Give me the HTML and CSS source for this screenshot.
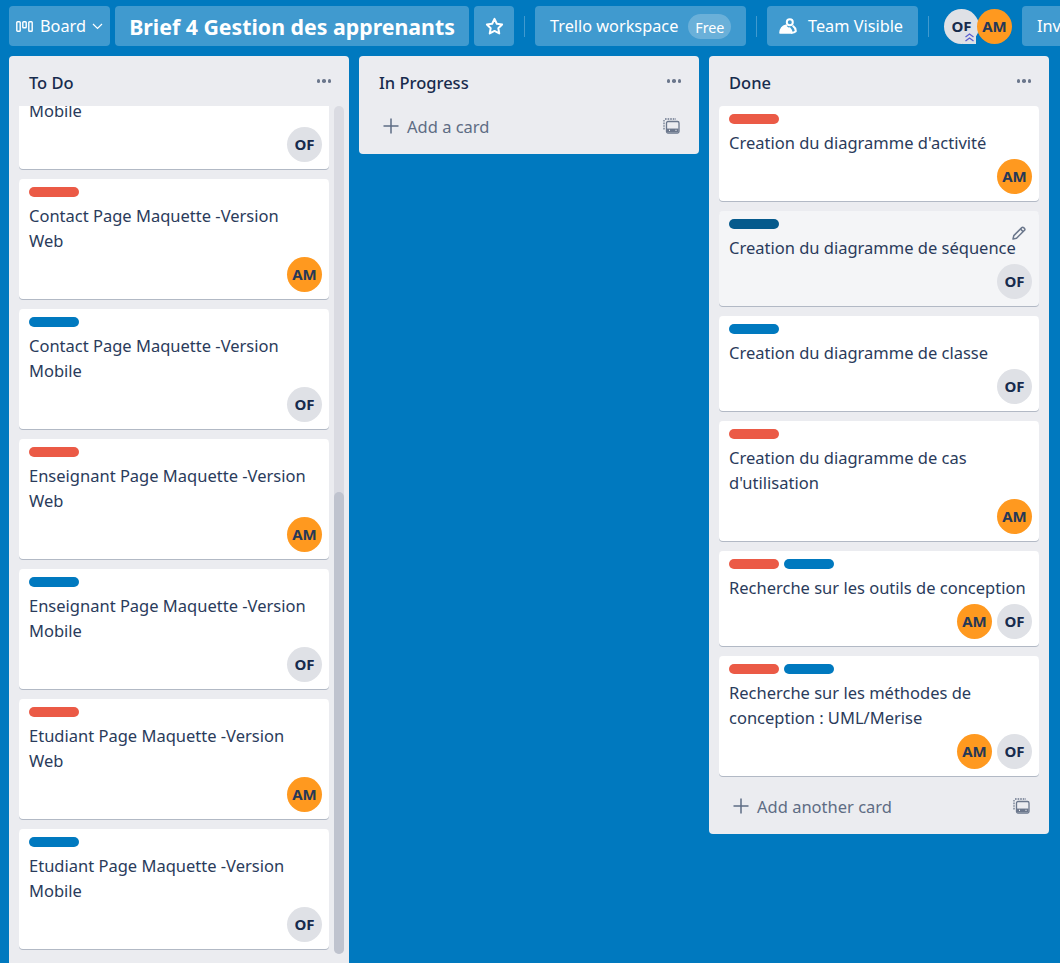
FILE: index.html
```html
<!DOCTYPE html>
<html lang="fr">
<head>
<meta charset="utf-8">
<title>Brief 4 Gestion des apprenants</title>
<link rel="stylesheet" href="styles.css">
</head>
<body>
<header class="topbar">
  <button class="btn board-btn">
    <svg class="board-ic" width="17" height="11" viewBox="0 0 17 11" fill="none" stroke="#fff" stroke-width="1.400"><rect x=".8" y=".8" width="3.400" height="9.400" rx=".8"/><rect x="6.800" y=".8" width="3.400" height="6" rx=".8"/><rect x="12.800" y=".8" width="3.400" height="9.400" rx=".8"/></svg>
    <span>Board</span>
    <svg class="chev" width="11" height="7" viewBox="0 0 11 7" fill="none" stroke="#fff" stroke-width="1.200"><path d="M1 1l4.500 4.500L10 1"/></svg>
  </button>
  <button class="btn title-btn">Brief 4 Gestion des apprenants</button>
  <button class="btn star-btn" aria-label="Star">
    <svg width="19" height="19" viewBox="0 0 18 18" fill="none" stroke="#fff" stroke-width="1.900" stroke-linejoin="round"><path d="M9 1.800l2.200 4.600 5 .7-3.600 3.500.9 5L9 13.200l-4.500 2.400.9-5L1.800 7.100l5-.7z"/></svg>
  </button>
  <span class="sep"></span>
  <button class="btn workspace-btn"><span>Trello workspace</span><span class="free">Free</span></button>
  <span class="sep"></span>
  <button class="btn team-btn">
    <svg width="18" height="16" viewBox="0 0 18 16" fill="none" stroke="#fff" stroke-width="2" stroke-linejoin="round" stroke-linecap="round"><circle cx="10.800" cy="4.200" r="3"/><path d="M7 7.500C3.800 8.300 1.600 10.800 1.200 14.800h11.500c-.3-1.800-1-3.300-2.200-4.500" fill="#fff"/><path d="M14.200 8.200c1.500 1 2.400 2.700 2.600 5-.8.800-2 1.500-4 1.500"/></svg>
    <span>Team Visible</span>
  </button>
  <span class="sep"></span>
  <div class="members">
    <span class="avatar grey">OF
      <svg class="admin" width="13" height="13" viewBox="0 0 13 13" fill="none" stroke="#5a5fcf" stroke-width="1.300"><path d="M2.500 6 6.500 3l4 3M2.500 10l4-3 4 3"/></svg>
    </span>
    <span class="avatar orange">AM</span>
  </div>
  <button class="btn invite-btn">Invite</button>
</header>

<main class="board">
  <section class="list list-scroll">
    <h2 class="list-title"><span>To Do</span><span class="dots"><i></i><i></i><i></i></span></h2>
    <div class="cards-wrap">
      <div class="cards offset">
        <article class="card"><div class="labels"><span class="label blue"></span></div><p><br>Mobile</p><div class="card-members"><span class="avatar grey">OF</span></div></article>
        <article class="card"><div class="labels"><span class="label red"></span></div><p>Contact Page Maquette -Version<br>Web</p><div class="card-members"><span class="avatar orange">AM</span></div></article>
        <article class="card"><div class="labels"><span class="label blue"></span></div><p>Contact Page Maquette -Version<br>Mobile</p><div class="card-members"><span class="avatar grey">OF</span></div></article>
        <article class="card"><div class="labels"><span class="label red"></span></div><p>Enseignant Page Maquette -Version<br>Web</p><div class="card-members"><span class="avatar orange">AM</span></div></article>
        <article class="card"><div class="labels"><span class="label blue"></span></div><p>Enseignant Page Maquette -Version<br>Mobile</p><div class="card-members"><span class="avatar grey">OF</span></div></article>
        <article class="card"><div class="labels"><span class="label red"></span></div><p>Etudiant Page Maquette -Version<br>Web</p><div class="card-members"><span class="avatar orange">AM</span></div></article>
        <article class="card"><div class="labels"><span class="label blue"></span></div><p>Etudiant Page Maquette -Version<br>Mobile</p><div class="card-members"><span class="avatar grey">OF</span></div></article>
      </div>
      <div class="scrolltrack"><div class="scrollthumb"></div></div>
    </div>
  </section>

  <section class="list">
    <h2 class="list-title"><span>In Progress</span><span class="dots"><i></i><i></i><i></i></span></h2>
    <div class="add-row">
      <span class="add"><svg width="16" height="16" viewBox="0 0 16 16" stroke="#5e6c84" stroke-width="1.500"><path d="M8 .5v15M.5 8h15"/></svg>Add a card</span>
      <svg width="17" height="16" viewBox="0 0 17 16" fill="none" stroke="#6b778c" stroke-width="1.300"><path d="M1 2v10" stroke-dasharray="1.600 1"/><path d="M2 1h11" stroke-dasharray="1.600 1"/><rect x="3.500" y="3.500" width="12.500" height="11.500" rx="1.500"/><path d="M4 12.300h11.500" stroke-width="3.500"/><path d="M6 12.300h1M12.500 12.300h1" stroke="#ebecf0"/></svg>
    </div>
  </section>

  <section class="list">
    <h2 class="list-title"><span>Done</span><span class="dots"><i></i><i></i><i></i></span></h2>
    <div class="cards">
      <article class="card"><div class="labels"><span class="label red"></span></div><p>Creation du diagramme d'activité</p><div class="card-members"><span class="avatar orange">AM</span></div></article>
      <article class="card hover"><div class="labels"><span class="label navy"></span></div><p>Creation du diagramme de séquence</p><div class="card-members"><span class="avatar grey">OF</span></div>
        <span class="edit"><svg width="16" height="16" viewBox="0 0 16 16" fill="none" stroke="#6b778c" stroke-width="1.500" stroke-linejoin="round"><path d="M2 14l.8-3.400L10.800 2.600a1.300 1.300 0 0 1 1.800 0l.9.900a1.300 1.300 0 0 1 0 1.800L5.500 13.300z"/><path d="M9.500 4l2.600 2.600"/></svg></span>
      </article>
      <article class="card"><div class="labels"><span class="label blue"></span></div><p>Creation du diagramme de classe</p><div class="card-members"><span class="avatar grey">OF</span></div></article>
      <article class="card"><div class="labels"><span class="label red"></span></div><p>Creation du diagramme de cas<br>d'utilisation</p><div class="card-members"><span class="avatar orange">AM</span></div></article>
      <article class="card"><div class="labels"><span class="label red"></span><span class="label blue"></span></div><p>Recherche sur les outils de conception</p><div class="card-members"><span class="avatar orange">AM</span><span class="avatar grey">OF</span></div></article>
      <article class="card"><div class="labels"><span class="label red"></span><span class="label blue"></span></div><p>Recherche sur les méthodes de<br>conception : UML/Merise</p><div class="card-members"><span class="avatar orange">AM</span><span class="avatar grey">OF</span></div></article>
    </div>
    <div class="add-row done-add">
      <span class="add"><svg width="16" height="16" viewBox="0 0 16 16" stroke="#5e6c84" stroke-width="1.500"><path d="M8 .5v15M.5 8h15"/></svg>Add another card</span>
      <svg width="17" height="16" viewBox="0 0 17 16" fill="none" stroke="#6b778c" stroke-width="1.300"><path d="M1 2v10" stroke-dasharray="1.600 1"/><path d="M2 1h11" stroke-dasharray="1.600 1"/><rect x="3.500" y="3.500" width="12.500" height="11.500" rx="1.500"/><path d="M4 12.300h11.500" stroke-width="3.500"/><path d="M6 12.300h1M12.500 12.300h1" stroke="#ebecf0"/></svg>
    </div>
  </section>
</main>
</body>
</html>
```

FILE: styles.css
```css
* { box-sizing: border-box; }
html, body { height: 100%; }
body {
  margin: 0;
  height: 963px;
  overflow: hidden;
  background: #0079bf;
  font-family: "Noto Sans", "Liberation Sans", sans-serif;
  color: #172b4d;
  display: flex;
  flex-direction: column;
}
.topbar {
  display: flex;
  align-items: center;
  height: 56px;
  padding: 6px 0 10px 9px;
  white-space: nowrap;
  flex: none;
  width: 1060px;
  overflow: hidden;
}
.btn {
  height: 40px;
  border: 0;
  border-radius: 4px;
  background: rgba(255, 255, 255, .25);
  color: #fff;
  font: 400 16.300px "Noto Sans", sans-serif;
  display: inline-flex;
  align-items: center;
  flex: none;
  padding: 0;
}
.board-btn { width: 101px; padding-left: 7px; }
.board-ic { margin-right: 7px; }
.chev { margin-left: 6px; }
.title-btn { width: 354px; margin-left: 5px; justify-content: center; font-size: 21.300px; font-weight: 700; }
.star-btn { width: 40px; margin-left: 5px; justify-content: center; }
.sep { width: 1px; height: 21px; background: rgba(255, 255, 255, .25); margin: 0 10px; flex: none; }
.workspace-btn { width: 211px; padding-left: 15px; gap: 10px; }
.free { background: rgba(255, 255, 255, .22); border-radius: 13px; height: 25px; width: 43px; font-size: 14.300px; line-height: 27px; text-align: center; }
.team-btn { width: 151px; padding-left: 12px; gap: 11px; }
.members { display: flex; margin-left: 5px; margin-top: 1px; }
.avatar {
  width: 35px;
  height: 35px;
  border-radius: 50%;
  display: inline-flex;
  align-items: center;
  justify-content: center;
  padding-bottom: 2px;
  font-size: 15px;
  font-weight: 700;
  flex: none;
  position: relative;
}
.avatar.grey { background: #dfe1e6; color: #172b4d; }
.avatar.orange { background: #ff991f; color: #253858; }
.members .orange { margin-left: -2px; }
.admin { position: absolute; right: 3px; bottom: 0; background: #dfe1e6; }
.invite-btn { width: 80px; margin-left: 10px; padding-left: 15px; }

.board {
  flex: 1;
  min-height: 0;
  display: flex;
  align-items: flex-start;
  gap: 10px;
  padding-left: 9px;
}
.list {
  width: 340px;
  background: #ebecf0;
  border-radius: 4px;
  flex: none;
  display: flex;
  flex-direction: column;
  max-height: 100%;
}
.list-scroll { height: 907px; border-radius: 4px 4px 0 0; }
.list-title {
  margin: 0;
  height: 50px;
  padding: 16px 18px 0 20px;
  font-size: 16.500px;
  line-height: 22px;
  font-weight: 500;
  display: flex;
  justify-content: space-between;
  flex: none;
}
.dots { display: flex; gap: 2px; padding-top: 7px; }
.dots i { width: 3.500px; height: 3.500px; border-radius: 50%; background: #6b778c; }
.cards-wrap { position: relative; height: 848px; overflow: hidden; padding: 0 20px 0 10px; flex: none; }
.cards { display: flex; flex-direction: column; gap: 10px; padding: 0 10px; }
.cards-wrap .cards { padding: 0; }
.offset { margin-top: -57px; }
.card {
  position: relative;
  background: #fff;
  border-radius: 4px;
  box-shadow: 0 1px 0 rgba(9, 30, 66, .25);
  padding: 8px 7px 7px 10px;
}
.card.hover { background: #f4f5f7; }
.labels { display: flex; gap: 5px; height: 10px; margin-bottom: 6px; }
.label { width: 50px; height: 10px; border-radius: 5px; }
.red { background: #eb5a46; }
.blue { background: #0079bf; }
.navy { background: #055a8c; }
.card p { margin: 0 0 4px; font-size: 16.500px; line-height: 25px; color: #2a3b5b; white-space: nowrap; }
.card-members { display: flex; justify-content: flex-end; gap: 5px; height: 35px; }
.edit { position: absolute; right: 12px; top: 13px; width: 16px; height: 16px; }
.scrolltrack { position: absolute; right: 5px; top: 0; bottom: 0; width: 10px; border-radius: 5px; background: #dadbe2; }
.scrollthumb { position: absolute; left: 0; right: 0; top: 386px; height: 462px; border-radius: 5px; background: #bfc3ce; }
.add-row {
  height: 48px;
  padding: 0 19px 8px 24px;
  display: flex;
  align-items: center;
  justify-content: space-between;
  color: #5e6c84;
  font-size: 16.500px;
  flex: none;
}
.done-add { margin-top: 10px; }
.add { display: inline-flex; align-items: center; gap: 8px; }
```
